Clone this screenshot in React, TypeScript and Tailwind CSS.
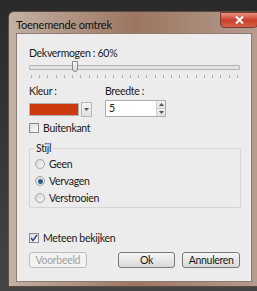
import React from 'react';

const font = { fontFamily: 'Lato, "Noto Sans", Arial, sans-serif' };

const Radio = ({ label, checked }: { label: string; checked?: boolean }) => (
	<div className="flex items-center gap-[4px] h-[16px]">
		<span className="w-[10px] h-[10px] rounded-full border border-[#a4a4a4] bg-gradient-to-br from-[#d8d8d8] to-[#fafafa] flex items-center justify-center">
			{checked && <span className="w-[5px] h-[5px] rounded-full bg-[#2a5d8a]" />}
		</span>
		<span className="text-[#1a1a1a]">{label}</span>
	</div>
);

const Check = ({ label, checked }: { label: string; checked?: boolean }) => (
	<div className="flex items-center gap-[4px] h-[14px]">
		<span className="w-[10px] h-[10px] border border-[#8a8a8a] bg-gradient-to-br from-[#dcdcdc] to-[#fafafa] flex items-center justify-center">
			{checked && (
				<svg width="8" height="8" viewBox="0 0 8 8">
					<path d="M1 4 L3 6.5 L7 1" stroke="#2c4a8c" strokeWidth="1.6" fill="none" />
				</svg>
			)}
		</span>
		<span className="text-[#1a1a1a]">{label}</span>
	</div>
);

const Btn = ({ label, disabled, className }: { label: string; disabled?: boolean; className?: string }) => (
	<div
		className={`h-[16px] w-[58px] rounded-[3px] border flex items-center justify-center ${
			disabled
				? 'border-[#bcbcbc] bg-[#f2f2f2] text-[#a0a0a0]'
				: 'border-[#7a7a7a] bg-gradient-to-b from-[#f6f6f6] to-[#d8d8d8] text-[#1a1a1a]'
		} ${className ?? ''}`}
	>
		{label}
	</div>
);

export default function App() {
	return (
		<div
			className="w-[257px] h-[291px] overflow-hidden bg-gradient-to-b from-[#2a2a2a] to-[#454545] pl-[8px] pt-[11px]"
			style={font}
		>
			<div className="relative w-[252px] h-[276px] rounded-t-[6px] border border-[#5a4a40] bg-gradient-to-r from-[#c2b2a6] via-[#9c7560] to-[#b59d90] text-[10.5px] tracking-[-0.3px] leading-none">
				<div className="h-[21px] pl-[7px] pt-[3px] flex items-center text-[11px] tracking-[-0.2px] text-[#111]">
					Toenemende omtrek
				</div>
				<div className="absolute right-[1px] top-[0px] w-[38px] h-[16px] rounded-b-[4px] border border-[#7a3a30] bg-gradient-to-b from-[#e89080] via-[#c8402c] to-[#d86048] flex items-center justify-center">
					<svg width="9" height="8" viewBox="0 0 9 8">
						<path d="M1 0.5 L8 7.5 M8 0.5 L1 7.5" stroke="#fff" strokeWidth="2" />
					</svg>
				</div>
				<div className="ml-[7px] w-[236px] h-[249px] bg-[#ececec] border border-[#8c7c72] pl-[12px] pr-[11px] pt-[14px]">
					<div className="text-[#1a1a1a]">Dekvermogen : 60%</div>
					<div className="relative mt-[6px] h-[5px] w-[211px] border border-[#b4b4b4] bg-[#e2e2e2] rounded-[1px]">
						<div className="absolute left-[42px] top-[-5px] w-[6px] h-[11px] rounded-b-[3px] border border-[#8a8a8a] bg-gradient-to-b from-[#fafafa] to-[#d6d6d6]" />
					</div>
					<div className="mt-[5px] w-[211px] flex justify-between px-[2px]">
						{Array.from({ length: 26 }).map((_, i) => (
							<span key={i} className="w-px h-[3px] bg-[#b0b0b0]" />
						))}
					</div>
					<div className="mt-[8px] flex">
						<div className="w-[76px]">
							<div className="text-[#1a1a1a]">Kleur :</div>
							<div className="mt-[6px] flex items-center gap-[2px]">
								<div className="w-[50px] h-[13px] bg-[#cc3a10] border border-[#b0b0b0]" />
								<div className="w-[11px] h-[15px] border border-[#b8b8b8] bg-gradient-to-b from-[#f4f4f4] to-[#dedede] flex items-center justify-center">
									<svg width="5" height="3" viewBox="0 0 5 3">
										<path d="M0 0 L5 0 L2.5 3 Z" fill="#555" />
									</svg>
								</div>
							</div>
						</div>
						<div>
							<div className="text-[#1a1a1a]">Breedte :</div>
							<div className="mt-[4px] w-[61px] h-[17px] border border-[#abadb3] bg-white flex">
								<div className="flex-1 pl-[3px] flex items-center text-[#1a1a1a]">5</div>
								<div className="w-[9px] flex flex-col border-l border-[#d0d0d0]">
									<div className="flex-1 bg-gradient-to-b from-[#f4f4f4] to-[#e0e0e0] border-b border-[#c8c8c8] flex items-center justify-center">
										<svg width="5" height="3" viewBox="0 0 5 3">
											<path d="M0 3 L5 3 L2.5 0 Z" fill="#555" />
										</svg>
									</div>
									<div className="flex-1 bg-gradient-to-b from-[#f4f4f4] to-[#e0e0e0] flex items-center justify-center">
										<svg width="5" height="3" viewBox="0 0 5 3">
											<path d="M0 0 L5 0 L2.5 3 Z" fill="#555" />
										</svg>
									</div>
								</div>
							</div>
						</div>
					</div>
					<div className="mt-[4px]">
						<Check label="Buitenkant" />
					</div>
					<div className="relative mt-[13px] w-[212px] h-[60px] border border-[#d4d4d4] rounded-[2px] pl-[5px] pt-[7px] flex flex-col gap-[1px]">
						<span className="absolute left-[4px] top-[-6px] px-[2px] bg-[#ececec] text-[#1a1a1a]">Stijl</span>
						<Radio label="Geen" />
						<Radio label="Vervagen" checked />
						<Radio label="Verstrooien" />
					</div>
					<div className="mt-[23px]">
						<Check label="Meteen bekijken" checked />
					</div>
					<div className="mt-[7px] flex">
						<Btn label="Voorbeeld" disabled />
						<Btn label="Ok" className="ml-[31px]" />
						<Btn label="Annuleren" className="ml-[7px]" />
					</div>
				</div>
			</div>
		</div>
	);
}
